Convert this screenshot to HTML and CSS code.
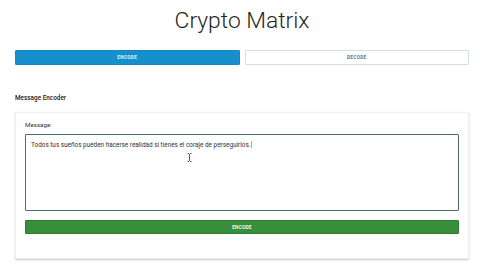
FILE: index.html
```html
<!DOCTYPE html>
<html>
<head>
<meta charset="utf-8">
<link rel="stylesheet" href="styles.css">
</head>
<body>
<div class="page">
  <h1 class="title">Crypto Matrix</h1>
  <div class="tabs">
    <button class="tab tab-active">ENCODE</button>
    <button class="tab">DECODE</button>
  </div>
  <div class="section-title">Message Encoder</div>
  <div class="card">
    <div class="label">Message:</div>
    <div class="input">Todos tus sueños pueden hacerse realidad si tienes el coraje de perseguirlos.<span class="caret"></span></div>
    <button class="submit">ENCODE</button>
  </div>
</div>
<svg class="ibeam" width="5" height="9" viewBox="0 0 5 9"><path d="M0.5 0.5h1.5M3 0.5h1.5M2.5 1v7M0.5 8.5h1.5M3 8.5h1.5" stroke="#333" stroke-width="0.8" fill="none"/></svg>
</body>
</html>
```
FILE: styles.css
```css
* { box-sizing: border-box; }
html, body { margin: 0; padding: 0; background: #fff; }
body { font-family: Roboto, "Noto Sans", sans-serif; color: #222; position: relative; width: 480px; height: 270px; overflow: hidden; }
.page { padding: 0 11px 0 15px; }
.title {
  margin: 0;
  padding-top: 5px;
  height: 50px;
  text-align: center;
  font-weight: 300;
  font-size: 22.8px;
  line-height: 32px;
  color: #1f1f1f;
}
.tabs { display: flex; gap: 5px; }
.tab {
  flex: 1;
  height: 15px;
  margin: 0;
  padding: 0;
  border: 1px solid #d6dde2;
  border-radius: 1px;
  background: #fff;
  color: #3d7e9a;
  font-family: Roboto, sans-serif;
  font-weight: 700;
  font-size: 4.6px;
  letter-spacing: 0.4px;
}
.tab-active { background: #1690cc; border-color: #1588c2; color: #e8f4fb; }
.section-title {
  margin-top: 29px;
  font-size: 6.4px;
  font-weight: 500;
  color: #1a1a1a;
  height: 18px;
  line-height: 9px;
}
.card {
  background: #fff;
  border: 1px solid #eef0f2;
  box-shadow: 0 1px 2px rgba(0,0,0,0.22);
  border-radius: 1px;
  padding: 8px 9px 25px 9px;
  height: 147px;
}
.label { font-size: 6.2px; color: #333; height: 13px; line-height: 8px; }
.input {
  height: 77px;
  border: 1px solid #4d6a78;
  border-radius: 1px;
  padding: 6px 5px;
  font-size: 6.4px;
  color: #333;
  line-height: 8px;
}
.caret { display: inline-block; width: 0.8px; height: 7px; background: #aaa; vertical-align: -1px; margin-left: 1px; }
.submit {
  display: block;
  width: 100%;
  margin-top: 9px;
  height: 14px;
  border: 1px solid #2f7a31;
  border-radius: 1px;
  background: #388e3a;
  color: #f1f7f1;
  font-family: Roboto, sans-serif;
  font-weight: 700;
  font-size: 4.8px;
  letter-spacing: 0.2px;
  padding: 0;
}
.ibeam { position: absolute; left: 187px; top: 153px; }
```
